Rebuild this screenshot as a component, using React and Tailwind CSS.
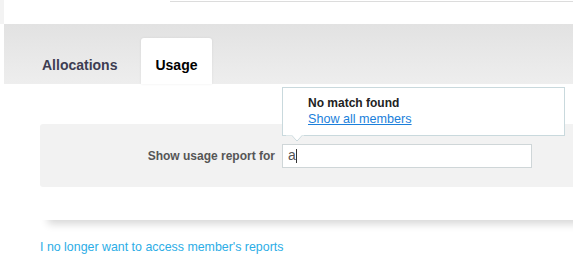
import React from 'react';

// Member report access: tab bar, usage lookup form and autocomplete popup
export default function App() {
  return (
    <div className="relative w-[573px] h-[261px] overflow-hidden bg-white font-['Liberation_Sans',Arial,sans-serif]">
      {/* header strip */}
      <div className="flex h-[24px]">
        <div className="w-[4px] bg-[#f3f3f3]" />
        <div className="flex-1 pl-[166px] pt-[1px]">
          <div className="border-t border-[#dcdcdc]" />
        </div>
      </div>

      {/* tabs */}
      <div className="ml-[4px] h-[60px] bg-linear-to-b from-[#e2e2e2] to-[#eeeeee] flex items-end pl-[24px] gap-[10px]">
        <div className="px-[14px] pt-[17px] pb-[9px] text-[14px] leading-[20px] font-bold text-[#3d3d52]">
          Allocations
        </div>
        <div className="px-[14px] pt-[17px] pb-[9px] text-[14px] leading-[20px] font-bold text-black bg-white rounded-t-[3px] shadow-[0_0_3px_rgba(0,0,0,0.07)]">
          Usage
        </div>
      </div>

      {/* content card */}
      <div className="ml-[40px] -mr-[20px] pt-[40px] pb-[33px] bg-white shadow-[0_12px_8px_-8px_rgba(0,0,0,0.16)]">
        <div className="h-[63px] bg-[#f2f2f2] rounded-l-[3px] flex items-center">
          <label className="w-[242px] pr-[7px] text-right text-[12px] font-bold text-[#565656]">
            Show usage report for
          </label>
          <div className="w-[250px] h-[24px] bg-white border border-[#cfd6d8] flex items-center pl-[5px] text-[14px] text-[#555]">
            <span>a</span>
            <span className="w-px h-[14px] bg-[#333]" />
          </div>
        </div>
      </div>

      <div className="pl-[40px] pt-[18px] text-[12.4px] text-[#2cade6]">
        I no longer want to access member's reports
      </div>

      {/* autocomplete popup */}
      <div className="absolute left-[282px] top-[87px] w-[283px] h-[49px] bg-white border border-[#c9d9dd] pl-[25px] pt-[8px]">
        <div className="text-[12px] leading-[15px] font-bold text-[#222]">No match found</div>
        <a className="block text-[12.6px] leading-[16px] text-[#1b7fdb] underline">Show all members</a>
        <svg className="absolute left-[3px] top-[47px]" width="18" height="9" viewBox="0 0 18 9">
          <path d="M0 0.5 L6 0.5 L11 6 L16 0.5" fill="white" stroke="#c9d9dd" />
          <path d="M0 0 L18 0 L18 0.4 L0 0.4Z" fill="white" />
          <path d="M6.5 0 L11 5.2 L15.5 0Z" fill="white" />
        </svg>
      </div>
    </div>
  );
}
